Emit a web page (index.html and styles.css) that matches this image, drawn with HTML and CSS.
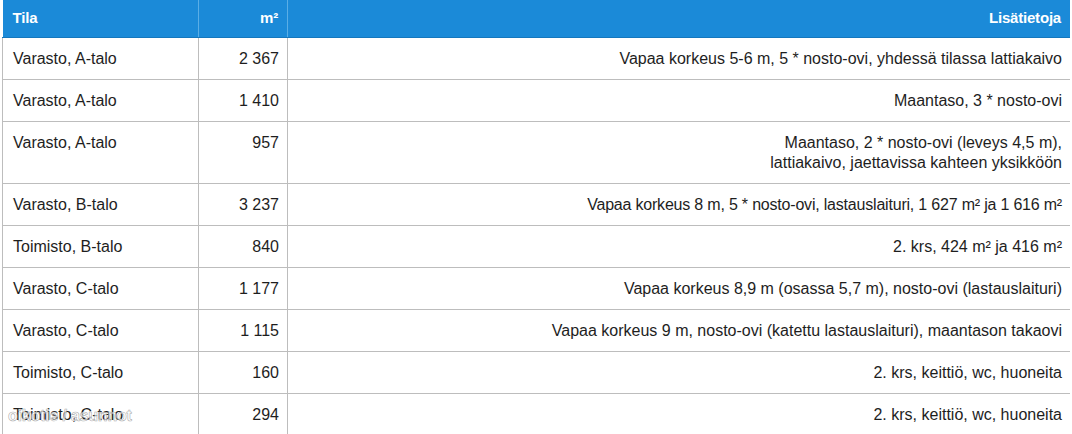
FILE: index.html
```html
<!DOCTYPE html>
<html lang="fi">
<head>
<meta charset="utf-8">
<link rel="stylesheet" href="styles.css">
</head>
<body>
<div class="wrap">
<table class="tilat">
  <colgroup><col class="c1"><col class="c2"><col class="c3"></colgroup>
  <thead>
    <tr><th class="left">Tila</th><th>m²</th><th>Lisätietoja</th></tr>
  </thead>
  <tbody>
    <tr><td class="left">Varasto, A-talo</td><td>2 367</td><td>Vapaa korkeus 5-6 m, 5 * nosto-ovi, yhdessä tilassa lattiakaivo</td></tr>
    <tr><td class="left">Varasto, A-talo</td><td>1 410</td><td>Maantaso, 3 * nosto-ovi</td></tr>
    <tr><td class="left">Varasto, A-talo</td><td>957</td><td>Maantaso, 2 * nosto-ovi (leveys 4,5 m),<br>lattiakaivo, jaettavissa kahteen yksikköön</td></tr>
    <tr><td class="left">Varasto, B-talo</td><td>3 237</td><td class="tight">Vapaa korkeus 8 m, 5 * nosto-ovi, lastauslaituri, 1 627 m² ja 1 616 m²</td></tr>
    <tr><td class="left">Toimisto, B-talo</td><td>840</td><td>2. krs, 424 m² ja 416 m²</td></tr>
    <tr><td class="left">Varasto, C-talo</td><td>1 177</td><td>Vapaa korkeus 8,9 m (osassa 5,7 m), nosto-ovi (lastauslaituri)</td></tr>
    <tr><td class="left">Varasto, C-talo</td><td>1 115</td><td>Vapaa korkeus 9 m, nosto-ovi (katettu lastauslaituri), maantason takaovi</td></tr>
    <tr><td class="left">Toimisto, C-talo</td><td>160</td><td>2. krs, keittiö, wc, huoneita</td></tr>
    <tr><td class="left">Toimisto, C-talo</td><td>294</td><td>2. krs, keittiö, wc, huoneita</td></tr>
  </tbody>
</table>
<div class="watermark">oikotie / asunnot</div>
</div>
</body>
</html>
```
FILE: styles.css
```css
html, body {
  margin: 0;
  padding: 0;
  background: #fff;
}
body {
  font-family: "Liberation Sans", Arial, sans-serif;
  color: #1e1e1e;
}
.wrap {
  position: relative;
  padding-left: 2px;
  width: 1068px;
}
.tilat {
  width: 1068px;
  border-collapse: collapse;
  table-layout: fixed;
  font-size: 16px;
}
.c1 { width: 196px; }
.c2 { width: 89px; }
.tilat th {
  background: #1b8ad8;
  color: #fff;
  font-weight: bold;
  font-size: 15px;
  letter-spacing: -0.2px;
  height: 37px;
  padding: 0 9px 1px 10px;
  text-align: right;
  border-left: 1px solid #5aaee6;
  border-bottom: 1px solid #1577bd;
  box-sizing: border-box;
}
.tilat th:first-child { border-left: none; }
.tilat td {
  padding: 11px 8px 10px 10px;
  line-height: 20px;
  text-align: right;
  vertical-align: top;
  border: 1px solid #bdbdbd;
  border-top: none;
}
.tilat td:last-child { border-right: none; }
.tilat .left { text-align: left; }
.tilat .tight { letter-spacing: -0.2px; }
.watermark {
  position: absolute;
  left: 8px;
  top: 407px;
  font-size: 16px;
  font-weight: bold;
  color: rgba(255, 255, 255, 0.7);
  -webkit-text-stroke: 0.6px rgba(150, 150, 150, 0.8);
  letter-spacing: -0.2px;
  pointer-events: none;
}
```
